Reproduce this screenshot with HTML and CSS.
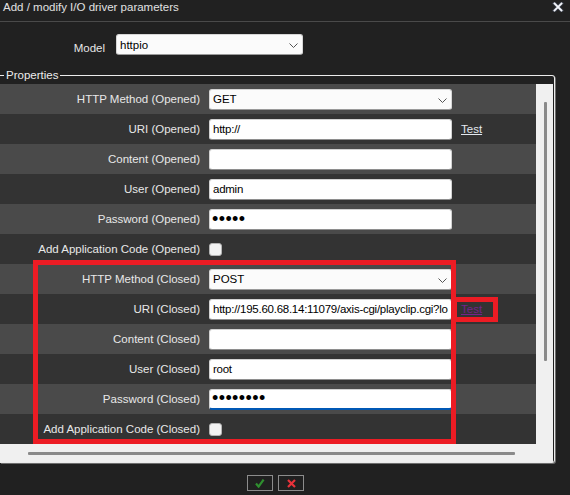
FILE: index.html
```html
<!DOCTYPE html>
<html lang="en">
<head>
<meta charset="utf-8">
<title>Add / modify I/O driver parameters</title>
<link rel="stylesheet" href="styles.css">
</head>
<body>
<div class="dialog">
  <header class="titlebar">
    <span class="title">Add / modify I/O driver parameters</span>
    <svg class="close" width="12" height="10" viewBox="0 0 12 10" aria-label="Close">
      <path d="M2.5 1.5 L9.5 8.5 M9.5 1.5 L2.5 8.5" stroke="#3a3f4a" stroke-width="3.6" stroke-linecap="square"/>
      <path d="M2.5 1.5 L9.5 8.5 M9.5 1.5 L2.5 8.5" stroke="#f4f6fb" stroke-width="1.8" stroke-linecap="square"/>
    </svg>
  </header>

  <div class="model-row">
    <label class="model-label">Model</label>
    <div class="select model-select" role="combobox"><span>httpio</span>
      <svg width="9" height="5" viewBox="0 0 9 5"><path d="M0.5 0.5 L4.5 4.5 L8.5 0.5" fill="none" stroke="#555" stroke-width="1"/></svg>
    </div>
  </div>

  <fieldset class="props">
    <legend>Properties</legend>
    <div class="scroll">
      <div class="viewport">
        <div class="row light">
          <label>HTTP Method (Opened)</label>
          <div class="select" role="combobox"><span>GET</span>
            <svg width="9" height="5" viewBox="0 0 9 5"><path d="M0.5 0.5 L4.5 4.5 L8.5 0.5" fill="none" stroke="#555" stroke-width="1"/></svg>
          </div>
        </div>
        <div class="row dark">
          <label>URI (Opened)</label>
          <input class="field" type="text" value="http://">
          <a class="test" href="#">Test</a>
        </div>
        <div class="row light">
          <label>Content (Opened)</label>
          <input class="field" type="text" value="">
        </div>
        <div class="row dark">
          <label>User (Opened)</label>
          <input class="field" type="text" value="admin">
        </div>
        <div class="row light">
          <label>Password (Opened)</label>
          <input class="field pass" type="password" value="admin">
        </div>
        <div class="row dark">
          <label>Add Application Code (Opened)</label>
          <input class="check" type="checkbox">
        </div>
        <div class="row light">
          <label>HTTP Method (Closed)</label>
          <div class="select" role="combobox"><span>POST</span>
            <svg width="9" height="5" viewBox="0 0 9 5"><path d="M0.5 0.5 L4.5 4.5 L8.5 0.5" fill="none" stroke="#555" stroke-width="1"/></svg>
          </div>
        </div>
        <div class="row dark">
          <label>URI (Closed)</label>
          <input class="field" type="text" value="http://195.60.68.14:11079/axis-cgi/playclip.cgi?location=alarm.mp3">
          <a class="test visited" href="#">Test</a>
        </div>
        <div class="row light">
          <label>Content (Closed)</label>
          <input class="field" type="text" value="">
        </div>
        <div class="row dark">
          <label>User (Closed)</label>
          <input class="field" type="text" value="root">
        </div>
        <div class="row light">
          <label>Password (Closed)</label>
          <input class="field pass focused" type="password" value="rootpass">
        </div>
        <div class="row dark">
          <label>Add Application Code (Closed)</label>
          <input class="check" type="checkbox">
        </div>
        <div class="mark mark-section"></div>
        <div class="mark mark-test"></div>
      </div>
      <div class="vbar"><div class="vthumb"></div></div>
      <div class="hbar"><div class="hthumb"></div></div>
      <div class="corner"></div>
    </div>
  </fieldset>

  <div class="actions">
    <button class="btn" type="button" aria-label="OK">
      <svg width="10" height="9" viewBox="0 0 10 9"><path d="M1 4.5 L3.6 7.6 L8.6 0.6" fill="none" stroke="#2f8f2f" stroke-width="2.2"/></svg>
    </button>
    <button class="btn" type="button" aria-label="Cancel">
      <svg width="9" height="9" viewBox="0 0 9 9"><path d="M1 1 L8 8 M8 1 L1 8" fill="none" stroke="#e8323a" stroke-width="2.2"/></svg>
    </button>
  </div>
</div>
</body>
</html>
```

FILE: styles.css
```css
html, body {
  margin: 0;
  padding: 0;
  background: #212121;
}

body {
  font-family: "Liberation Sans", Arial, sans-serif;
  font-size: 11.5px;
  color: #e6e6e6;
  width: 570px;
  height: 495px;
  overflow: hidden;
}

.titlebar {
  height: 21px;
  border-bottom: 1px solid #4a4a4a;
  display: flex;
  justify-content: space-between;
  align-items: flex-start;
  padding: 0 6px 0 3px;
  line-height: 15px;
  color: #e2e2e2;
}

.close {
  margin-top: 2px;
  display: block;
}

.model-row {
  display: grid;
  grid-template-columns: 105px 187px;
  column-gap: 11px;
  margin-top: 12px;
  align-items: start;
}

.model-label {
  text-align: right;
  line-height: 14px;
  margin-top: 7px;
}

.select {
  height: 21px;
  box-sizing: border-box;
  background: #fbfbfb;
  border: 1px solid #d6d6d6;
  border-bottom-color: #9a9a9a;
  border-radius: 3px;
  display: flex;
  align-items: center;
  justify-content: space-between;
  padding: 0 4px 0 3px;
  color: #000;
}

.select span {
  line-height: 14px;
}

.select svg {
  display: block;
  margin-top: 2px;
}

.model-select {
  padding-left: 3px;
}

.props {
  margin: 13px 15px 0 0;
  padding: 2px 1px 0 0;
  border: 1px solid #ececec;
  border-left: none;
  border-radius: 0 3px 3px 0;
  box-shadow: 1px 1px 0 #6e6e6e;
  min-width: 0;
}

.props legend {
  margin-left: 4px;
  padding: 0 2px;
  line-height: 14px;
  color: #ececec;
}

.scroll {
  display: grid;
  grid-template-columns: 536px 17px;
  grid-template-rows: 360px 18px;
  background: #f0f0f0;
}

.viewport {
  position: relative;
  overflow: hidden;
  background: #333;
}

.row {
  height: 30px;
  display: grid;
  grid-template-columns: 200px 243px max-content;
  column-gap: 9px;
  align-items: center;
}

.row.light { background: #4a4a4a; }
.row.dark { background: #333333; }

.row label {
  text-align: right;
  white-space: nowrap;
  color: #e8e8e8;
}

.field {
  height: 21px;
  box-sizing: border-box;
  margin: 0;
  background: #fff;
  border: 1px solid #d2d2d2;
  border-bottom-color: #8e8e8e;
  border-radius: 3px;
  padding: 0 3px;
  font-family: "Liberation Sans", Arial, sans-serif;
  font-size: 11.5px;
  letter-spacing: -0.25px;
  color: #000;
  outline: none;
}

.field.pass {
  font-size: 18px;
  letter-spacing: 0.4px;
  padding-left: 2px;
}

.field.focused {
  border-bottom: 2px solid #0058b5;
}

.check {
  appearance: none;
  -webkit-appearance: none;
  width: 13px;
  height: 13px;
  margin: 0;
  background: #f2f2f2;
  border: 1px solid #b4b4b4;
  border-radius: 3px;
  box-sizing: border-box;
}

.test {
  color: #e3e8ef;
  text-decoration: underline;
}

.test.visited {
  color: #74238a;
}

.mark {
  position: absolute;
  border: 5px solid #ec1c24;
  box-sizing: border-box;
}

.mark-section {
  left: 33px;
  top: 176px;
  width: 423px;
  height: 184px;
}

.mark-test {
  left: 452px;
  top: 213px;
  width: 46px;
  height: 25px;
}

.vbar {
  background: #f0f0f0;
  padding-top: 18px;
}

.vthumb {
  width: 3px;
  height: 259px;
  margin-left: 8px;
  background: #8a8a8a;
  border-radius: 1px;
}

.hbar {
  background: #f0f0f0;
  padding-top: 8px;
}

.hthumb {
  height: 3px;
  width: 487px;
  margin-left: 28px;
  background: #8a8a8a;
  border-radius: 1px;
}

.corner {
  background: #f0f0f0;
}

.actions {
  display: flex;
  justify-content: center;
  gap: 5px;
  padding-right: 19px;
  margin-top: 12px;
}

.btn {
  width: 26px;
  height: 16px;
  padding: 0;
  margin: 0;
  background: #202020;
  border: 1px solid #8c8c8c;
  display: flex;
  align-items: center;
  justify-content: center;
}

.btn svg {
  display: block;
}
```
